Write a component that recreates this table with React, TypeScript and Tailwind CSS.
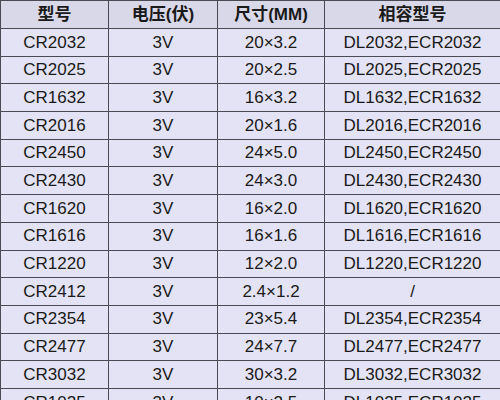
import React from 'react';

const rows: [string, string, string, string][] = [
  ['CR2032', '3V', '20×3.2', 'DL2032,ECR2032'],
  ['CR2025', '3V', '20×2.5', 'DL2025,ECR2025'],
  ['CR1632', '3V', '16×3.2', 'DL1632,ECR1632'],
  ['CR2016', '3V', '20×1.6', 'DL2016,ECR2016'],
  ['CR2450', '3V', '24×5.0', 'DL2450,ECR2450'],
  ['CR2430', '3V', '24×3.0', 'DL2430,ECR2430'],
  ['CR1620', '3V', '16×2.0', 'DL1620,ECR1620'],
  ['CR1616', '3V', '16×1.6', 'DL1616,ECR1616'],
  ['CR1220', '3V', '12×2.0', 'DL1220,ECR1220'],
  ['CR2412', '3V', '2.4×1.2', '/'],
  ['CR2354', '3V', '23×5.4', 'DL2354,ECR2354'],
  ['CR2477', '3V', '24×7.7', 'DL2477,ECR2477'],
  ['CR3032', '3V', '30×3.2', 'DL3032,ECR3032'],
  ['CR1025', '3V', '10×2.5', 'DL1025,ECR1025'],
];

const cell = 'border-[1.5px] border-[#4a4a55] text-center align-middle p-0';

export default function App() {
  return (
    <div className="w-[500px] h-[400px] overflow-hidden bg-[#e4e3f5]">
      <table
        className="table-fixed border-collapse w-[500px] text-[#1a1a1a]"
        style={{ fontFamily: '"Liberation Sans", "Noto Sans CJK SC", sans-serif' }}
      >
        <colgroup>
          <col className="w-[108px]" />
          <col className="w-[109px]" />
          <col className="w-[107px]" />
          <col className="w-[176px]" />
        </colgroup>
        <thead>
          <tr className="h-[28px] bg-[#d9d8e8] text-[17px] font-bold">
            <th className={cell}>型号</th>
            <th className={cell}>电压(伏)</th>
            <th className={cell}>尺寸(MM)</th>
            <th className={cell}>相容型号</th>
          </tr>
        </thead>
        <tbody className="text-[17px]">
          {rows.map((r) => (
            <tr key={r[0]} className="h-[27.7px]">
              {r.map((v, i) => (
                <td key={i} className={cell}>
                  {v}
                </td>
              ))}
            </tr>
          ))}
        </tbody>
      </table>
    </div>
  );
}
